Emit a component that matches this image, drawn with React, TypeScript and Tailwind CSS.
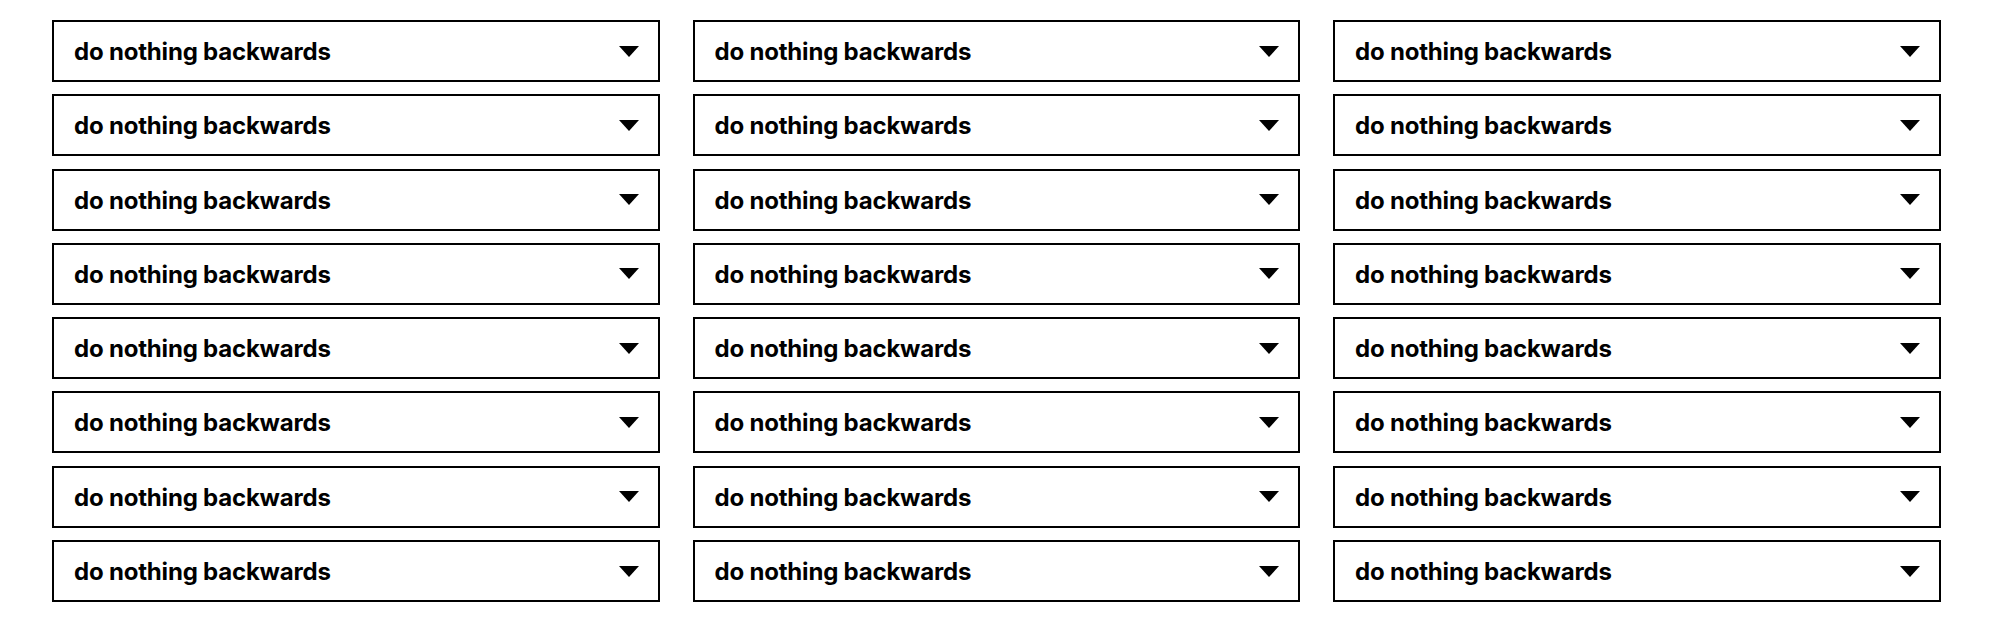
import React from "react";

function Select() {
  return (
    <div className="flex h-[62px] items-center justify-between border-2 border-black bg-white pl-5 pr-[19px]">
      <span className="translate-y-[1px] text-[24px] font-bold leading-none tracking-[-0.2px] text-black" style={{ fontFamily: "Inter, 'Liberation Sans', sans-serif" }}>
        do nothing backwards
      </span>
      <svg width="20" height="11" viewBox="0 0 20 11" className="shrink-0">
        <polygon points="0,0 20,0 10,11" fill="black" />
      </svg>
    </div>
  );
}

export default function App() {
  const items = Array.from({ length: 24 });
  return (
    <div className="min-h-[628px] w-[2010px] bg-white pl-[52px] pt-[20px]">
      <div className="grid w-[1888px] grid-cols-[607.5px_607.5px_607.5px] gap-x-[33px] gap-y-[12.3px]">
        {items.map((_, i) => (
          <Select key={i} />
        ))}
      </div>
    </div>
  );
}
